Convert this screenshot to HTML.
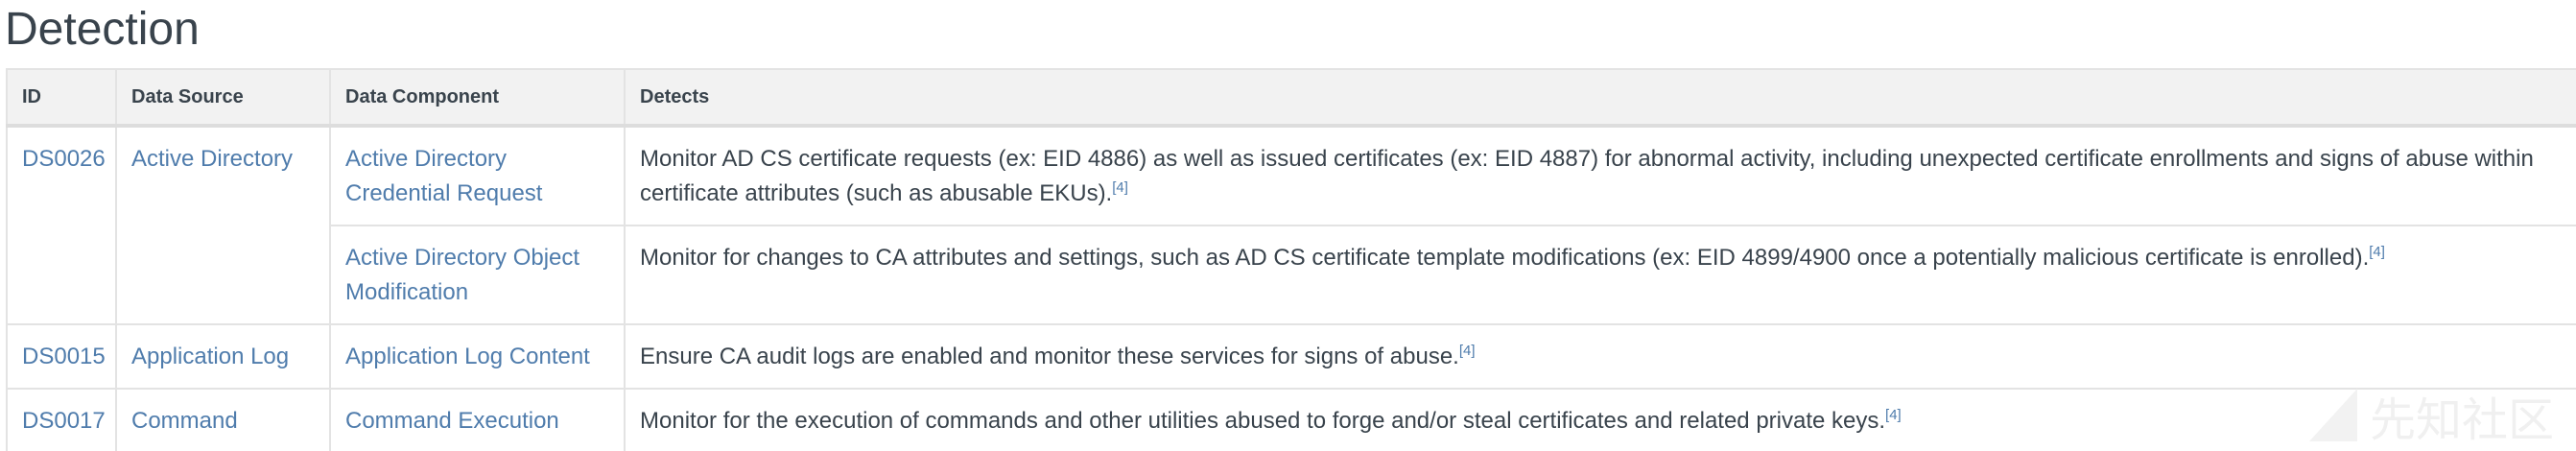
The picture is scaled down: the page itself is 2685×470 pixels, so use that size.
<!DOCTYPE html>
<html><head><meta charset="utf-8"><style>
html,body{margin:0;padding:0;background:#fff;width:2685px;height:470px;overflow:hidden;}
body{font-family:"Liberation Sans","Noto Sans CJK SC",sans-serif;color:#39434c;position:relative;}
h2{position:absolute;left:5px;top:0;margin:0;font-weight:normal;font-size:48px;line-height:62px;color:#39434c;}
table{position:absolute;left:6px;top:71px;border-collapse:collapse;width:2700px;font-size:24px;table-layout:fixed;}
th,td{border:2px solid #e3e3e3;text-align:left;vertical-align:top;padding:0 15px 0 15px;}
th{background:#f2f2f2;height:56px;font-weight:bold;font-size:20px;vertical-align:middle;border-bottom:4px solid #ddd;}
td{line-height:36px;padding-top:15px;padding-bottom:14px;}
a{color:#4f7cac;text-decoration:none;}
sup{font-size:15px;line-height:0;color:#4f7cac;}
.wm{position:absolute;left:2470px;top:405px;font-size:48px;line-height:56px;color:#f0f0f0;font-family:"Noto Sans CJK SC",sans-serif;white-space:nowrap;}
.tri{position:absolute;left:2407px;top:405px;width:0;height:0;border-left:50px solid transparent;border-bottom:55px solid #f2f2f2;}
</style></head><body>
<h2>Detection</h2>
<table>
<colgroup><col style="width:114px"><col style="width:223px"><col style="width:307px"><col></colgroup>
<tr><th>ID</th><th>Data Source</th><th>Data Component</th><th>Detects</th></tr>
<tr><td rowspan="2"><a>DS0026</a></td><td rowspan="2"><a>Active Directory</a></td><td><a>Active Directory Credential Request</a></td><td>Monitor AD CS certificate requests (ex: EID 4886) as well as issued certificates (ex: EID 4887) for abnormal activity, including unexpected certificate enrollments and signs of abuse within certificate attributes (such as abusable EKUs).<sup>[4]</sup></td></tr>
<tr><td><a>Active Directory Object Modification</a></td><td>Monitor for changes to CA attributes and settings, such as AD CS certificate template modifications (ex: EID 4899/4900 once a potentially malicious certificate is enrolled).<sup>[4]</sup></td></tr>
<tr><td><a>DS0015</a></td><td><a>Application Log</a></td><td><a>Application Log Content</a></td><td>Ensure CA audit logs are enabled and monitor these services for signs of abuse.<sup>[4]</sup></td></tr>
<tr><td><a>DS0017</a></td><td><a>Command</a></td><td><a>Command Execution</a></td><td>Monitor for the execution of commands and other utilities abused to forge and/or steal certificates and related private keys.<sup>[4]</sup></td></tr>
</table>
<div class="tri"></div>
<div class="wm">先知社区</div>
</body></html>
